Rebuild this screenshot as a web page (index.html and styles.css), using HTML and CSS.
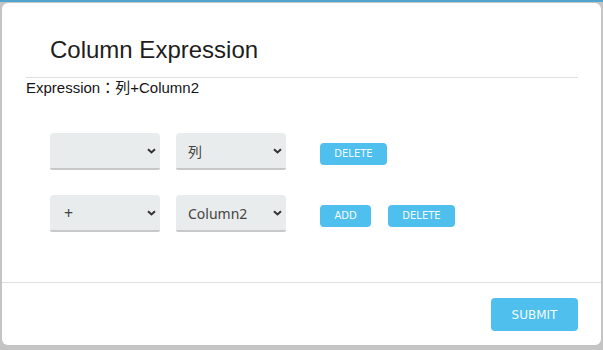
FILE: index.html
```html
<!DOCTYPE html>
<html>
<head>
<meta charset="utf-8">
<link rel="stylesheet" href="styles.css">
</head>
<body>
<div class="topbar"></div>
<div class="modal">
  <div class="header"><h1 class="title">Column Expression</h1></div>
  <div class="expr">Expression：列+Column2</div>
  <div class="body">
    <div class="row">
      <div class="select"><span class="val"></span><svg class="chev" width="9" height="6" viewBox="0 0 9 6"><path d="M1 1.2 L4.5 4.5 L8 1.2" fill="none" stroke="#333" stroke-width="2"/></svg></div>
      <div class="select"><span class="val">列</span><svg class="chev" width="9" height="6" viewBox="0 0 9 6"><path d="M1 1.2 L4.5 4.5 L8 1.2" fill="none" stroke="#333" stroke-width="2"/></svg></div>
      <div class="actions">
        <button class="btn btn-sm btn-del">DELETE</button>
      </div>
    </div>
    <div class="row">
      <div class="select"><span class="val plus">+</span><svg class="chev" width="9" height="6" viewBox="0 0 9 6"><path d="M1 1.2 L4.5 4.5 L8 1.2" fill="none" stroke="#333" stroke-width="2"/></svg></div>
      <div class="select"><span class="val">Column2</span><svg class="chev" width="9" height="6" viewBox="0 0 9 6"><path d="M1 1.2 L4.5 4.5 L8 1.2" fill="none" stroke="#333" stroke-width="2"/></svg></div>
      <div class="actions">
        <button class="btn btn-sm btn-add">ADD</button>
        <button class="btn btn-sm btn-del">DELETE</button>
      </div>
    </div>
  </div>
  <div class="footer">
    <button class="btn btn-submit">SUBMIT</button>
  </div>
</div>
</body>
</html>
```

FILE: styles.css
```css
html, body {
  margin: 0;
  padding: 0;
}
body {
  background: #c4c4c4;
  width: 603px;
  height: 350px;
  overflow: hidden;
  font-family: "Liberation Sans", "Noto Sans CJK JP", sans-serif;
}
.topbar {
  height: 2px;
  background: #4fa5cf;
  margin-bottom: 1px;
}
.modal {
  margin-left: 2px;
  width: 599px;
  height: 342px;
  background: #fff;
  border-radius: 6px;
  display: flex;
  flex-direction: column;
  box-sizing: border-box;
}
.header {
  height: 75px;
  box-sizing: border-box;
  margin: 0 23px 0 24px;
  padding: 33px 0 0 24px;
  border-bottom: 1px solid #dedede;
}
.title {
  margin: 0;
  font-size: 24px;
  line-height: 28px;
  font-weight: normal;
  color: #1e1e1e;
}
.expr {
  margin-left: 24px;
  font-size: 15px;
  line-height: 18px;
  margin-top: 1px;
  color: #151515;
}
.body {
  flex: 1;
  padding: 36px 0 0 48px;
  display: flex;
  flex-direction: column;
  gap: 25px;
}
.row {
  display: flex;
  align-items: flex-start;
}
.select {
  width: 110px;
  height: 37px;
  box-sizing: border-box;
  background: #e9eced;
  border-bottom: 2px solid #c6c8c9;
  border-radius: 4px 4px 2px 2px;
  display: flex;
  align-items: center;
  justify-content: space-between;
  padding: 1px 4px 0 12px;
  font-family: "Noto Sans", "Noto Sans CJK JP", sans-serif;
  font-size: 14px;
  color: #444;
}
.select + .select {
  margin-left: 16px;
}
.val.plus {
  padding-left: 2px;
  font-size: 16px;
}
.actions {
  margin-left: 34px;
  margin-top: 10px;
  display: flex;
  gap: 17px;
}
.btn {
  border: none;
  background: #4fbfee;
  color: #f4fbff;
  font-family: "DejaVu Sans", Verdana, sans-serif;
  border-radius: 4px;
  cursor: pointer;
}
.btn-sm {
  height: 22px;
  font-size: 10px;
  padding: 0 14px;
  line-height: 22px;
}
.btn-del {
  width: 67px;
}
.btn-add {
  width: 51px;
}
.footer {
  border-top: 1px solid #dedede;
  padding: 15px 23px 14px 0;
  display: flex;
  justify-content: flex-end;
}
.btn-submit {
  width: 87px;
  height: 33px;
  font-size: 12px;
  padding: 0;
}
```
